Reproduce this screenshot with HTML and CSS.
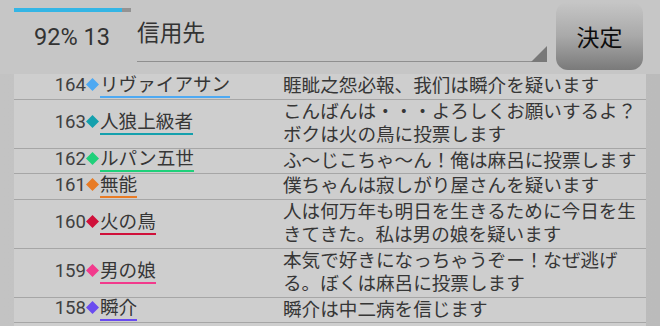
FILE: index.html
```html
<!DOCTYPE html>
<html lang="ja">
<head>
<meta charset="utf-8">
<title>投票</title>
<link rel="stylesheet" href="styles.css">
</head>
<body>
<header class="top">
  <div class="status">
    <div class="bar"><div class="fill" style="width:92%"></div></div>
    <div class="count">92% 13</div>
  </div>
  <div class="field">信用先</div>
  <button class="decide" type="button">決定</button>
</header>
<main class="board">
  <ul class="log">
    <li class="row">
      <div class="who"><span class="num">164</span><svg class="dia c1" viewBox="0 0 13 13"><polygon points="6.5,0 13,6.5 6.5,13 0,6.5"/></svg><span class="name c1">リヴァイアサン</span></div>
      <div class="msg">睚眦之怨必報、我们は瞬介を疑います</div>
    </li>
    <li class="row">
      <div class="who"><span class="num">163</span><svg class="dia c2" viewBox="0 0 13 13"><polygon points="6.5,0 13,6.5 6.5,13 0,6.5"/></svg><span class="name c2">人狼上級者</span></div>
      <div class="msg">こんばんは・・・よろしくお願いするよ？ボクは火の鳥に投票します</div>
    </li>
    <li class="row">
      <div class="who"><span class="num">162</span><svg class="dia c3" viewBox="0 0 13 13"><polygon points="6.5,0 13,6.5 6.5,13 0,6.5"/></svg><span class="name c3">ルパン五世</span></div>
      <div class="msg">ふ〜じこちゃ〜ん！俺は麻呂に投票します</div>
    </li>
    <li class="row">
      <div class="who"><span class="num">161</span><svg class="dia c4" viewBox="0 0 13 13"><polygon points="6.5,0 13,6.5 6.5,13 0,6.5"/></svg><span class="name c4">無能</span></div>
      <div class="msg">僕ちゃんは寂しがり屋さんを疑います</div>
    </li>
    <li class="row">
      <div class="who"><span class="num">160</span><svg class="dia c5" viewBox="0 0 13 13"><polygon points="6.5,0 13,6.5 6.5,13 0,6.5"/></svg><span class="name c5">火の鳥</span></div>
      <div class="msg">人は何万年も明日を生きるために今日を生きてきた。私は男の娘を疑います</div>
    </li>
    <li class="row">
      <div class="who"><span class="num">159</span><svg class="dia c6" viewBox="0 0 13 13"><polygon points="6.5,0 13,6.5 6.5,13 0,6.5"/></svg><span class="name c6">男の娘</span></div>
      <div class="msg">本気で好きになっちゃうぞー！なぜ逃げる。ぼくは麻呂に投票します</div>
    </li>
    <li class="row">
      <div class="who"><span class="num">158</span><svg class="dia c7" viewBox="0 0 13 13"><polygon points="6.5,0 13,6.5 6.5,13 0,6.5"/></svg><span class="name c7">瞬介</span></div>
      <div class="msg">瞬介は中二病を信じます</div>
    </li>
  </ul>
</main>
</body>
</html>
```

FILE: styles.css
```css
html, body {
  margin: 0;
  padding: 0;
}

body {
  width: 660px;
  height: 326px;
  overflow: hidden;
  background: #c6c6c6;
  font-family: Roboto, "Noto Sans CJK JP", sans-serif;
  color: #363636;
}

.top {
  display: flex;
  align-items: flex-start;
  height: 74px;
  padding-left: 14px;
  box-sizing: border-box;
}

.status {
  width: 123px;
  flex: none;
}

.bar {
  margin-top: 8px;
  width: 117px;
  height: 4px;
  background: #939393;
}

.fill {
  height: 100%;
  background: #33b5e5;
}

.count {
  margin-top: 12px;
  padding-left: 20px;
  font-size: 23.5px;
  line-height: 27px;
  color: #333;
}

.field {
  position: relative;
  flex: 1;
  height: 62px;
  box-sizing: border-box;
  padding-top: 19px;
  font-size: 22.7px;
  line-height: 30px;
  color: #333;
  border-bottom: 1px solid #8f8f8f;
}

.field::after {
  content: "";
  position: absolute;
  right: 0;
  bottom: -1px;
  width: 0;
  height: 0;
  border-left: 16px solid transparent;
  border-bottom: 16px solid #787878;
}

.decide {
  flex: none;
  margin: 2px 17px 0 9px;
  width: 87px;
  height: 68px;
  border: none;
  border-radius: 12px;
  background: linear-gradient(#c6c6c6 0%, #a9a9a9 50%, #7a7a7a 100%);
  font-family: "Noto Sans CJK JP", sans-serif;
  font-size: 23px;
  color: #0d0d0d;
  padding: 0;
}

.board {
  height: 252px;
  background: linear-gradient(to right, #c3c3c3, #bbbbbb);
}

.log {
  margin: 0 14px;
  padding: 0;
  list-style: none;
  height: 100%;
  background: #cecece;
}

.row {
  display: grid;
  grid-template-columns: 269px 1fr;
  align-items: center;
  border-bottom: 1px solid #a6a6a6;
  font-size: 18.6px;
}

.who {
  line-height: 20px;
  white-space: nowrap;
}

.num {
  display: inline-block;
  width: 72px;
  text-align: right;
  color: #404040;
}

.dia {
  width: 13px;
  height: 13px;
  margin-right: 1px;
  vertical-align: baseline;
}

.name {
  display: inline-block;
  padding-bottom: 1px;
  border-bottom: 2px solid;
  color: #363636;
}

.msg {
  padding: 1px 4px 0 0;
  line-height: 23.5px;
  color: #363636;
}

.dia.c1 { fill: #4ea9f2; }
.dia.c2 { fill: #14a0ad; }
.dia.c3 { fill: #1fd07a; }
.dia.c4 { fill: #e87b25; }
.dia.c5 { fill: #d0103a; }
.dia.c6 { fill: #f23a8c; }
.dia.c7 { fill: #6a4cf0; }

.name.c1 { border-color: #4ea9f2; }
.name.c2 { border-color: #14a0ad; }
.name.c3 { border-color: #1fd07a; }
.name.c4 { border-color: #e87b25; }
.name.c5 { border-color: #d0103a; }
.name.c6 { border-color: #f23a8c; }
.name.c7 { border-color: #6a4cf0; }
```
